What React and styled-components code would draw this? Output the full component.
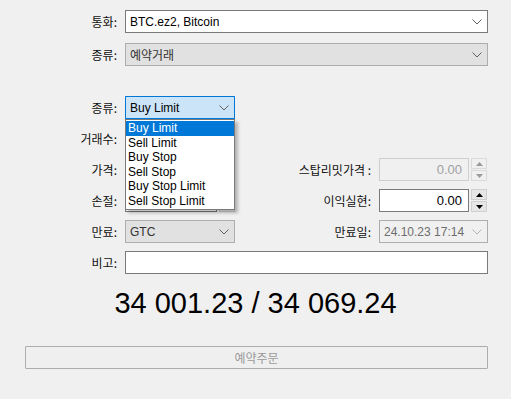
import React from 'react';
import styled, { createGlobalStyle, css } from 'styled-components';

const GlobalStyle = createGlobalStyle`
  body {
    margin: 0;
    background: #f0f0f0;
    font-family: "Liberation Sans", "Noto Sans CJK KR", sans-serif;
    font-size: 12px;
    color: #000;
  }
`;

const Page = styled.div`
  width: 511px;
  height: 399px;
  padding-top: 10px;
  box-sizing: border-box;
  display: flex;
  flex-direction: column;
`;

const Row = styled.div`
  display: grid;
  grid-template-columns: 117px 110px 128px 109px;
  column-gap: 8px;
  height: 23px;
  align-items: center;
  margin-top: ${p => p.$top || 0}px;
`;

const Label = styled.label`
  text-align: right;
  font-family: "Noto Sans CJK KR", sans-serif;
  font-size: 12px;
  line-height: 23px;
  color: #111;
  white-space: nowrap;
`;

const boxLook = {
  normal: css`
    background: #fff;
    border-color: #7a7a7a;
    color: #000;
  `,
  disabled: css`
    background: #e1e1e1;
    border-color: #adadad;
    color: #333;
  `,
  focus: css`
    background: #cce4f7;
    border-color: #0078d7;
    color: #000;
  `,
  readonly: css`
    background: #f0f0f0;
    border-color: #adadad;
    color: #6d6d6d;
  `,
  off: css`
    background: #f0f0f0;
    border-color: #cfcfcf;
    color: #a0a0a0;
  `,
};

const Box = styled.div`
  position: relative;
  grid-column: ${p => p.$span || 'auto'};
  height: 23px;
  box-sizing: border-box;
  border: 1px solid;
  display: flex;
  align-items: center;
  justify-content: space-between;
  padding: 0 5px 0 4px;
  font-size: 12px;
  white-space: nowrap;
  ${p => boxLook[p.$look || 'normal']}
`;

const KoText = styled.span`
  font-family: "Noto Sans CJK KR", sans-serif;
`;

const Chevron = ({ light }) => (
  <svg width="10" height="6" viewBox="0 0 10 6">
    <polyline points="0.5,0.5 5,5 9.5,0.5" fill="none" stroke={light ? '#b4b4b4' : '#606060'} strokeWidth="1" />
  </svg>
);

const Combo = styled.div`
  position: relative;
  height: 23px;
`;

const List = styled.ul`
  position: absolute;
  z-index: 10;
  top: 23px;
  left: 0;
  width: 110px;
  margin: 0;
  padding: 1px 0 1px;
  list-style: none;
  box-sizing: border-box;
  background: #fff;
  border: 1px solid #7a7a7a;
  box-shadow: 3px 3px 3px rgba(0, 0, 0, 0.25);
`;

const Item = styled.li`
  height: 14.5px;
  line-height: 14.5px;
  padding-left: 2px;
  font-size: 12px;
  background: ${p => (p.$active ? '#0078d7' : 'transparent')};
  color: ${p => (p.$active ? '#fff' : '#000')};
`;

const NumWrap = styled.div`
  display: flex;
  gap: 2px;
  height: 23px;
  width: ${p => p.$w || 108}px;
`;

const NumBox = styled(Box)`
  flex: 1;
  justify-content: flex-end;
  padding-right: 6px;
  font-size: 13px;
`;

const Spin = styled.div`
  width: 16px;
  display: flex;
  flex-direction: column;
  gap: 1px;
`;

const SpinBtn = styled.div`
  flex: 1;
  display: flex;
  align-items: center;
  justify-content: center;
  box-sizing: border-box;
  border: 1px solid ${p => (p.$off ? '#dadada' : '#cfcfcf')};
  background: ${p => (p.$off ? '#f0f0f0' : '#e6e6e6')};
`;

const Arrow = ({ down, off }) => (
  <svg width="7" height="4" viewBox="0 0 7 4">
    <polygon points={down ? '0,0 7,0 3.5,4' : '0,4 7,4 3.5,0'} fill={off ? '#9a9a9a' : '#000'} />
  </svg>
);

const Spinner = ({ off }) => (
  <Spin>
    <SpinBtn $off={off}><Arrow off={off} /></SpinBtn>
    <SpinBtn $off={off}><Arrow down off={off} /></SpinBtn>
  </Spin>
);

const NumField = ({ value, look, w }) => (
  <NumWrap $w={w}>
    <NumBox $look={look}>{value}</NumBox>
    <Spinner off={look === 'off'} />
  </NumWrap>
);

const Price = styled.div`
  margin-top: 12px;
  text-align: center;
  font-size: 29px;
  line-height: 34px;
  color: #000;
`;

const OrderButton = styled.button`
  margin: 26px 0 0 25px;
  width: 463px;
  height: 23px;
  box-sizing: border-box;
  border: 1px solid #adadad;
  border-radius: 1px;
  background: #efefef;
  color: #9a9a9a;
  font-family: "Noto Sans CJK KR", sans-serif;
  font-size: 12px;
  padding: 0;
`;

const orderTypes = ['Buy Limit', 'Sell Limit', 'Buy Stop', 'Sell Stop', 'Buy Stop Limit', 'Sell Stop Limit'];

export default function App() {
  return (
    <Page>
      <GlobalStyle />
      <Row>
        <Label>통화:</Label>
        <Box $span="2 / 5">BTC.ez2, Bitcoin<Chevron /></Box>
      </Row>
      <Row $top={10}>
        <Label>종류:</Label>
        <Box $span="2 / 5" $look="disabled"><KoText>예약거래</KoText><Chevron /></Box>
      </Row>

      <Row $top={30}>
        <Label>종류:</Label>
        <Combo>
          <Box $look="focus">Buy Limit<Chevron /></Box>
          <List>
            {orderTypes.map((t, i) => (
              <Item key={t} $active={i === 0}>{t}</Item>
            ))}
          </List>
        </Combo>
      </Row>
      {/* fields below are covered by the open list */}
      <Row $top={8}>
        <Label>거래수:</Label>
        <NumField />
      </Row>
      <Row $top={8}>
        <Label>가격:</Label>
        <NumField />
        <Label>스탑리밋가격 :</Label>
        <NumField value="0.00" look="off" />
      </Row>
      <Row $top={8}>
        <Label>손절:</Label>
        <NumField w={110} />
        <Label>이익실현:</Label>
        <NumField value="0.00" />
      </Row>
      <Row $top={8}>
        <Label>만료:</Label>
        <Box $look="disabled">GTC<Chevron /></Box>
        <Label>만료일:</Label>
        <Box $look="readonly">24.10.23 17:14<Chevron light /></Box>
      </Row>
      <Row $top={8}>
        <Label>비고:</Label>
        <Box $span="2 / 5" />
      </Row>

      <Price>34 001.23 / 34 069.24</Price>
      <OrderButton disabled>예약주문</OrderButton>
    </Page>
  );
}
